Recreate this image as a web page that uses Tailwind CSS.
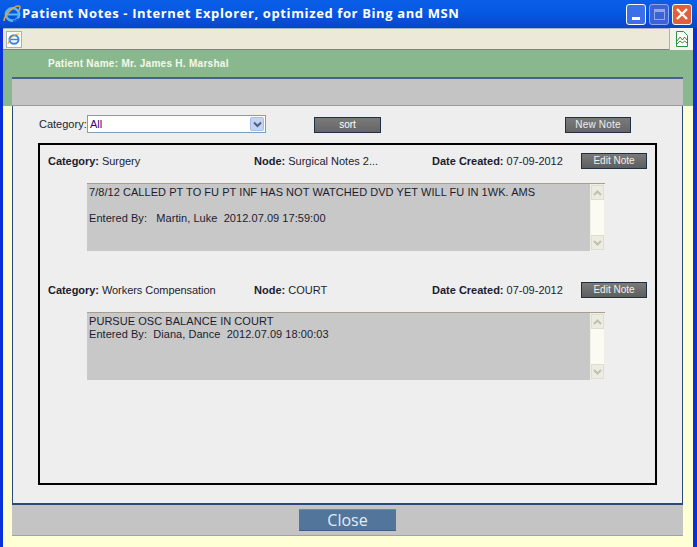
<!DOCTYPE html>
<html>
<head>
<meta charset="utf-8">
<script src="https://cdn.jsdelivr.net/npm/@tailwindcss/browser@4"></script>
</head>
<body class="m-0 overflow-hidden">
<div class="w-[697px] h-[547px] flex flex-col overflow-hidden bg-[#0831d9] font-['Liberation_Sans',sans-serif] text-[11px] text-[#1c1c30]">
  <!-- title bar -->
  <div class="h-[28px] shrink-0 flex items-center pl-[3px] pr-[5px] bg-gradient-to-b from-[#0a5fe8] via-[#0457e0] to-[#0a45c8]">
    <svg class="w-[18px] h-[20px] shrink-0" viewBox="0 0 18 20"><ellipse cx="9.5" cy="10.5" rx="6.6" ry="6.2" fill="none" stroke="#5fb4ee" stroke-width="2.6"/><path d="M4 10.5h11" stroke="#5fb4ee" stroke-width="2"/><path d="M10 17c3 0 4.500-1 5-2.500" stroke="#0a5fe8" stroke-width="2" fill="none"/><path d="M1 17C1 12 9 3 15 2c3-.5 2 3 .5 5" fill="none" stroke="#e8a838" stroke-width="1.500"/></svg>
    <div class="ml-[1px] text-white font-bold text-[13px] tracking-[0.62px] whitespace-nowrap font-['Open_Sans',sans-serif]">Patient Notes - Internet Explorer, optimized for Bing and MSN</div>
    <div class="ml-auto flex gap-[3px]">
      <div class="w-[20px] h-[21px] rounded-[3px] border border-white bg-[#3c6fe8] flex items-end pl-[5px] pb-[4px]"><div class="w-[8px] h-[3px] bg-white"></div></div>
      <div class="w-[20px] h-[21px] rounded-[3px] border border-[#8fa8ec] bg-[#3c62d8] flex items-center justify-center"><div class="w-[11px] h-[11px] border border-[#8fa8ec] border-t-[3px]"></div></div>
      <div class="w-[20px] h-[21px] rounded-[3px] border border-white bg-[#e0603c] flex items-center justify-center"><svg class="w-[12px] h-[12px]" viewBox="0 0 12 12"><path d="M1 1l10 10M11 1L1 11" stroke="#fff" stroke-width="2.400"/></svg></div>
    </div>
  </div>
  <div class="flex-1 min-h-0 ml-[3px] mr-[4px] flex flex-col bg-[#ffffd6]">
    <!-- toolbar -->
    <div class="h-[22px] shrink-0 flex justify-between items-center bg-[#ece9d8] border-t border-[#a8b4c8] border-b border-b-[#808080]">
      <div class="ml-[3px] w-[16px] h-[17px] bg-white border border-[#b0b0b0] flex items-center justify-center">
        <svg class="w-[14px] h-[14px]" viewBox="0 0 14 14"><ellipse cx="7" cy="7.500" rx="4.500" ry="4.200" fill="none" stroke="#3a86d8" stroke-width="2"/><path d="M3 7.500h8" stroke="#3a86d8" stroke-width="1.500"/><path d="M1 12C2 7 7 2 12 2" fill="none" stroke="#e8a838"/></svg>
      </div>
      <div class="w-[24px] h-[22px] bg-[#f4f4ee] border-l border-[#a0b0c8] flex items-center justify-center">
        <svg class="w-[14px] h-[16px]" viewBox="0 0 14 16"><path d="M1.500.5h7l4 4v11h-11z" fill="#fff" stroke="#2f8f3f"/><path d="M2 10l3-4 2.500 3 2-3 2.500 3M2 13l3-3 2.500 2 2-2 2.500 2" fill="none" stroke="#2f8f3f"/></svg>
      </div>
    </div>
    <!-- patient band -->
    <div class="h-[56px] shrink-0 bg-[#8ab88e] flex flex-col">
      <div class="h-[27px] shrink-0 pl-[45px] flex items-center text-[#f4f8ea] font-bold text-[10px] tracking-[0.28px]">Patient Name: Mr. James H. Marshal</div>
      <div class="ml-[9px] mr-[10px] flex-1 bg-[#c4c4c4] border-t-2 border-[#44648c] border-b border-b-[#9a9a9a]"></div>
    </div>
    <!-- content -->
    <div class="flex-1 min-h-0 ml-[9px] mr-[10px] flex flex-col">
      <div class="h-[399px] shrink-0 bg-[#eeeeee] border-l border-r border-b-2 border-[#2a4a78] flex flex-col px-[26px]">
        <div class="h-[37px] shrink-0 relative">
          <div class="flex items-center pt-[9px]">
            <span class="ml-[0px] w-[48px]">Category:</span>
            <div class="w-[179px] h-[18px] bg-white border border-[#7f9db9] flex items-center justify-between pl-[2px] pr-[1px] text-[#400080]">All
              <div class="w-[14px] h-[14px] rounded-[2px] bg-[#c4d3f4] border border-[#a8bce8] flex items-center justify-center"><svg class="w-[9px] h-[7px]" viewBox="0 0 9 7"><path d="M1 1.500l3.500 3.500 3.500-3.500" fill="none" stroke="#4d6185" stroke-width="2"/></svg></div>
            </div>
            <button class="ml-[48px] mt-[2px] w-[67px] h-[16px] bg-gradient-to-b from-[#7a7a7a] to-[#666666] border border-[#1f2f45] text-white text-[10px] leading-none">sort</button>
            <button class="ml-[184px] mt-[2px] w-[66px] h-[16px] bg-gradient-to-b from-[#7a7a7a] to-[#666666] border border-[#1f2f45] text-[#eeeeee] text-[10px] leading-none tracking-[0.2px]">New Note</button>
          </div>
        </div>
        <div class="h-[342px] shrink-0 border-2 border-black -mx-px flex flex-col pt-[8px] pl-[8px] pr-[8px] gap-[31px]">
          <!-- note 1 -->
          <div class="flex flex-col">
            <div class="h-[16px] relative flex items-center">
              <span class="w-[206px] whitespace-nowrap tracking-[-0.05px]"><b>Category:</b> Surgery</span>
              <span class="w-[178px] whitespace-nowrap"><b>Node:</b> Surgical Notes 2...</span>
              <span class="whitespace-nowrap"><b>Date Created:</b> 07-09-2012</span>
              <button class="ml-auto mr-[0px] w-[66px] h-[16px] bg-gradient-to-b from-[#7a7a7a] to-[#5e5e5e] border border-[#1f2f45] text-[#f0f0f0] text-[10px] leading-none">Edit Note</button>
            </div>
            <div class="mt-[14px] ml-[39px] w-[518px] h-[68px] flex bg-[#c8c8c8] border-t border-[#a89e90]">
              <div class="flex-1 pl-[2px] pt-[2px] leading-[13px] tracking-[0.05px]">
                <div>7/8/12 CALLED PT TO FU PT INF HAS NOT WATCHED DVD YET WILL FU IN 1WK. AMS</div>
                <div class="mt-[13px] whitespace-pre">Entered By:   Martin, Luke  2012.07.09 17:59:00</div>
              </div>
              <div class="w-[15px] flex flex-col justify-between bg-[#fbfbf4] border border-[#f0f0e8]">
                <div class="h-[15px] bg-[#ecece2] border border-[#dedece] flex items-center justify-center"><svg class="w-[9px] h-[6px]" viewBox="0 0 9 6"><path d="M1 5l3.500-3.500L8 5" fill="none" stroke="#c0c0b0" stroke-width="2"/></svg></div>
                <div class="h-[15px] bg-[#ecece2] border border-[#dedece] flex items-center justify-center"><svg class="w-[9px] h-[6px]" viewBox="0 0 9 6"><path d="M1 1l3.500 3.500L8 1" fill="none" stroke="#c0c0b0" stroke-width="2"/></svg></div>
              </div>
            </div>
          </div>
          <!-- note 2 -->
          <div class="flex flex-col">
            <div class="h-[16px] relative flex items-center">
              <span class="w-[206px] whitespace-nowrap tracking-[-0.05px]"><b>Category:</b> Workers Compensation</span>
              <span class="w-[178px] whitespace-nowrap"><b>Node:</b> COURT</span>
              <span class="whitespace-nowrap"><b>Date Created:</b> 07-09-2012</span>
              <button class="ml-auto mr-[0px] w-[66px] h-[16px] bg-gradient-to-b from-[#7a7a7a] to-[#5e5e5e] border border-[#1f2f45] text-[#f0f0f0] text-[10px] leading-none">Edit Note</button>
            </div>
            <div class="mt-[14px] ml-[39px] w-[518px] h-[68px] flex bg-[#c8c8c8] border-t border-[#a89e90]">
              <div class="flex-1 pl-[2px] pt-[2px] leading-[13px] tracking-[0.05px]">
                <div>PURSUE OSC BALANCE IN COURT</div>
                <div class="whitespace-pre">Entered By:  Diana, Dance  2012.07.09 18:00:03</div>
              </div>
              <div class="w-[15px] flex flex-col justify-between bg-[#fbfbf4] border border-[#f0f0e8]">
                <div class="h-[15px] bg-[#ecece2] border border-[#dedece] flex items-center justify-center"><svg class="w-[9px] h-[6px]" viewBox="0 0 9 6"><path d="M1 5l3.500-3.500L8 5" fill="none" stroke="#c0c0b0" stroke-width="2"/></svg></div>
                <div class="h-[15px] bg-[#ecece2] border border-[#dedece] flex items-center justify-center"><svg class="w-[9px] h-[6px]" viewBox="0 0 9 6"><path d="M1 1l3.500 3.500L8 1" fill="none" stroke="#c0c0b0" stroke-width="2"/></svg></div>
              </div>
            </div>
          </div>
        </div>
      </div>
      <!-- footer -->
      <div class="h-[31px] shrink-0 bg-[#c4c4c4] border-b border-[#9aa4b8] flex justify-center pt-[4px] pl-[0px]">
        <button class="w-[97px] h-[22px] bg-[#52759c] border-t border-[#6b8bb0] border-b border-b-[#3e5f86] text-[#e4ecf4] text-[16px] leading-none font-['Open_Sans',sans-serif]">Close</button>
      </div>
    </div>
  </div>
</div>
</body>
</html>
